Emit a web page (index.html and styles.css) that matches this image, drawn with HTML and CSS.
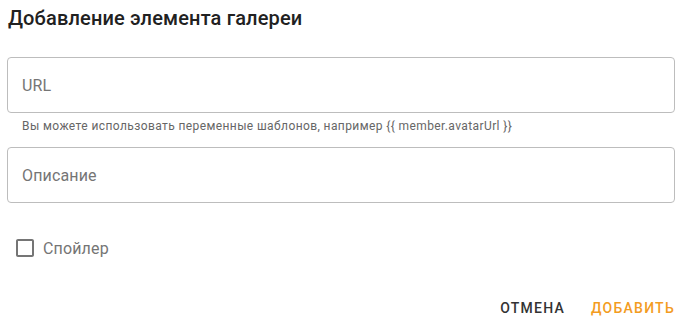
FILE: index.html
```html
<!DOCTYPE html>
<html lang="ru">
<head>
<meta charset="UTF-8">
<meta name="viewport" content="width=device-width, initial-scale=1.0">
<title>Добавление элемента галереи</title>
<link rel="stylesheet" href="styles.css">
</head>
<body>
<div class="dialog">
    <h2 class="dialog-title">Добавление элемента галереи</h2>

    <div class="field">
        <input type="text" placeholder="URL">
    </div>
    <div class="helper">Вы можете использовать переменные шаблонов, например {{ member.avatarUrl }}</div>

    <div class="field field-second">
        <input type="text" placeholder="Описание">
    </div>

    <label class="check">
        <span class="check-box">
            <svg width="24" height="24" viewBox="0 0 24 24">
                <path fill="#757575" d="M19 5v14H5V5h14m0-2H5c-1.1 0-2 .9-2 2v14c0 1.1.9 2 2 2h14c1.1 0 2-.9 2-2V5c0-1.1-.9-2-2-2z"/>
            </svg>
        </span>
        <span class="check-label">Спойлер</span>
    </label>

    <div class="actions">
        <button class="btn">Отмена</button>
        <button class="btn btn-primary">Добавить</button>
    </div>
</div>
</body>
</html>
```

FILE: styles.css
```css
body {
    margin: 0;
    font-family: Roboto, "Noto Sans", Arial, sans-serif;
    color: #222;
    background: #fff;
}
.dialog {
    width: 668px;
    padding: 0 9px 0 7px;
}
.dialog-title {
    margin: 0;
    padding: 2px 1px 0;
    font-size: 20px;
    font-weight: 500;
    line-height: 32px;
    letter-spacing: 0.15px;
    color: #212121;
}
.field {
    margin-top: 23px;
    height: 56px;
    border: 1px solid #bdbdbd;
    border-radius: 4px;
    box-sizing: border-box;
}
.field-second {
    margin-top: 11px;
}
.field input {
    width: 100%;
    height: 100%;
    box-sizing: border-box;
    border: none;
    outline: none;
    background: transparent;
    padding: 0 14px;
    font-family: inherit;
    font-size: 16px;
    letter-spacing: 0.15px;
    color: #333;
}
.field input::placeholder {
    color: #757575;
}
.helper {
    margin: 3px 14px 0 15px;
    font-size: 12px;
    line-height: 20px;
    letter-spacing: 0.4px;
    color: #666;
}
.check {
    display: flex;
    align-items: center;
    margin-top: 24px;
    height: 42px;
    cursor: pointer;
}
.check-box {
    display: flex;
    padding: 9px 6px 9px 9px;
    margin-left: -3px;
}
.check-label {
    font-size: 16px;
    letter-spacing: 0.15px;
    color: #757575;
}
.actions {
    display: flex;
    justify-content: flex-end;
    gap: 10px;
    margin-top: 25px;
    margin-right: -8px;
}
.btn {
    background: none;
    border: none;
    padding: 6px 8px;
    font-family: inherit;
    font-size: 14px;
    font-weight: 500;
    letter-spacing: 1.25px;
    text-transform: uppercase;
    color: #333;
    cursor: pointer;
}
.btn-primary {
    color: #f39c1f;
}
```
